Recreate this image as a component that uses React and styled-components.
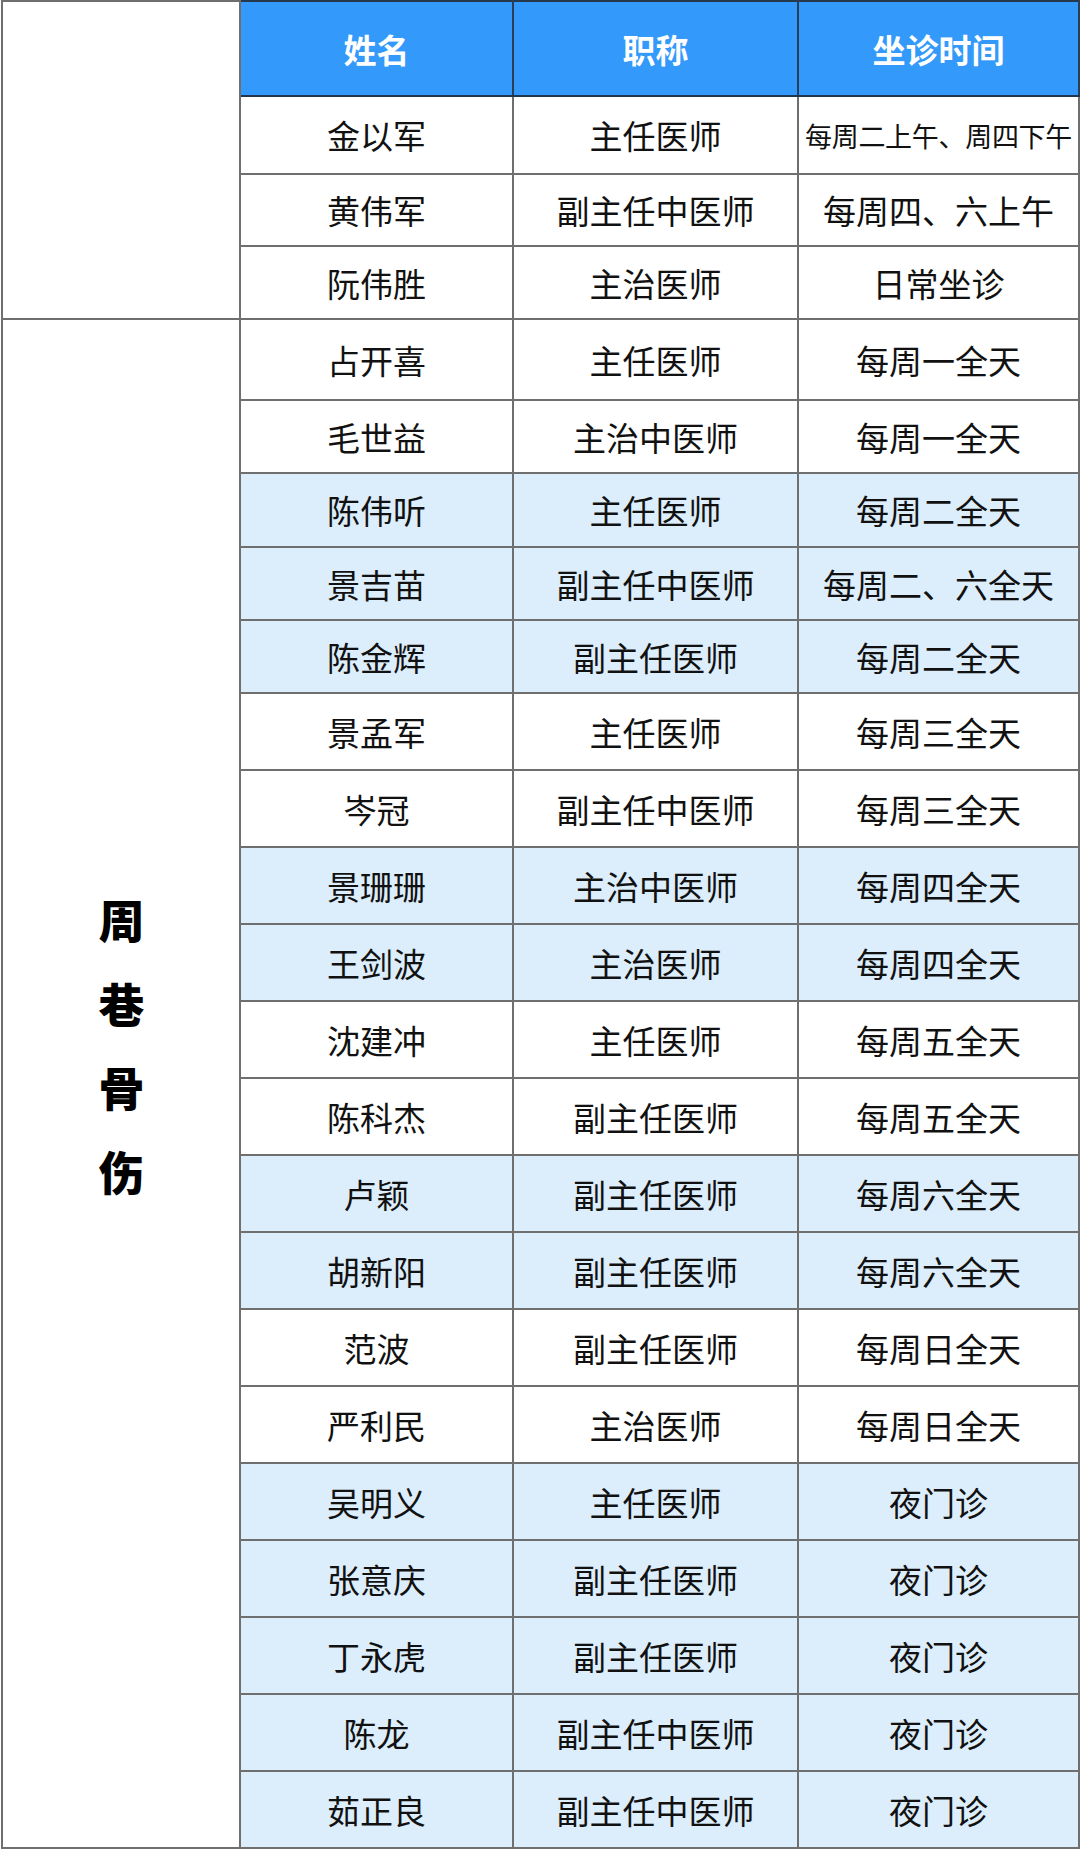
import React from 'react';
import styled, { createGlobalStyle } from 'styled-components';

const Global = createGlobalStyle`
  html, body {
    margin: 0;
    padding: 0;
    background: #ffffff;
  }
  body {
    font-family: "Noto Sans CJK SC", "Noto Sans", sans-serif;
    color: #111;
  }
`;

const Page = styled.div`
  width: 1080px;
  padding-left: 1px;
  box-sizing: border-box;
`;

const Table = styled.table`
  width: 1077px;
  table-layout: fixed;
  border-collapse: collapse;
  border: 2px solid #6f6f6f;
`;

const Row = styled.tr`
  height: ${props => props.h}px;
  background-color: ${props => (props.blue ? '#dcedfb' : '#ffffff')};
`;

const HeadCell = styled.th`
  background-color: #3399fa;
  color: #ffffff;
  font-size: 33px;
  font-weight: 700;
  text-align: center;
  padding: 0;
  border: 2px solid #6f6f6f;
  border-top-color: #26384c;
  border-bottom-color: #1f3550;
  border-left-color: #2b3e55;
  border-right-color: #2b3e55;
`;

const Cell = styled.td`
  font-size: ${props => (props.small ? 27 : 33)}px;
  letter-spacing: ${props => (props.small ? '-0.3px' : '0')};
  text-align: center;
  vertical-align: middle;
  white-space: nowrap;
  overflow: hidden;
  padding: 0;
  border: 2px solid #6f6f6f;
`;

const GroupCell = styled.td`
  background-color: #ffffff;
  border: 2px solid #6f6f6f;
  vertical-align: middle;
  text-align: center;
  padding: 0 0 ${props => props.lift || 0}px;
`;

const GroupName = styled.div`
  font-size: 46px;
  font-weight: 900;
  line-height: 83px;
  color: #000;
  writing-mode: vertical-rl;
  text-orientation: upright;
  letter-spacing: 38px;
  margin: 0 auto;
  display: inline-block;
`;

const first = [
  ['金以军', '主任医师', '每周二上午、周四下午', 78],
  ['黄伟军', '副主任中医师', '每周四、六上午', 72],
  ['阮伟胜', '主治医师', '日常坐诊', 73]
];

const second = [
  ['占开喜', '主任医师', '每周一全天', 81, false],
  ['毛世益', '主治中医师', '每周一全天', 73, false],
  ['陈伟听', '主任医师', '每周二全天', 74, true],
  ['景吉苗', '副主任中医师', '每周二、六全天', 73, true],
  ['陈金辉', '副主任医师', '每周二全天', 73, true],
  ['景孟军', '主任医师', '每周三全天', 77, false],
  ['岑冠', '副主任中医师', '每周三全天', 77, false],
  ['景珊珊', '主治中医师', '每周四全天', 77, true],
  ['王剑波', '主治医师', '每周四全天', 77, true],
  ['沈建冲', '主任医师', '每周五全天', 77, false],
  ['陈科杰', '副主任医师', '每周五全天', 77, false],
  ['卢颖', '副主任医师', '每周六全天', 77, true],
  ['胡新阳', '副主任医师', '每周六全天', 77, true],
  ['范波', '副主任医师', '每周日全天', 77, false],
  ['严利民', '主治医师', '每周日全天', 77, false],
  ['吴明义', '主任医师', '夜门诊', 77, true],
  ['张意庆', '副主任医师', '夜门诊', 77, true],
  ['丁永虎', '副主任医师', '夜门诊', 77, true],
  ['陈龙', '副主任中医师', '夜门诊', 77, true],
  ['茹正良', '副主任中医师', '夜门诊', 77, true]
];

export default function App() {
  return (
    <Page>
      <Global />
      <Table>
        <colgroup>
          <col style={{ width: 238 }} />
          <col style={{ width: 273 }} />
          <col style={{ width: 285 }} />
          <col style={{ width: 281 }} />
        </colgroup>
        <tbody>
          <Row h={95}>
            <GroupCell rowSpan={4} />
            <HeadCell>姓名</HeadCell>
            <HeadCell>职称</HeadCell>
            <HeadCell>坐诊时间</HeadCell>
          </Row>
          {first.map(([name, title, time, h]) => (
            <Row h={h} key={name}>
              <Cell>{name}</Cell>
              <Cell>{title}</Cell>
              <Cell small={time.length > 8}>{time}</Cell>
            </Row>
          ))}
          {second.map(([name, title, time, h, blue], i) => (
            <Row h={h} blue={blue} key={name}>
              {i === 0 ? (
                <GroupCell rowSpan={second.length} lift={30}>
                  <GroupName>周巷骨伤</GroupName>
                </GroupCell>
              ) : null}
              <Cell>{name}</Cell>
              <Cell>{title}</Cell>
              <Cell>{time}</Cell>
            </Row>
          ))}
        </tbody>
      </Table>
    </Page>
  );
}
